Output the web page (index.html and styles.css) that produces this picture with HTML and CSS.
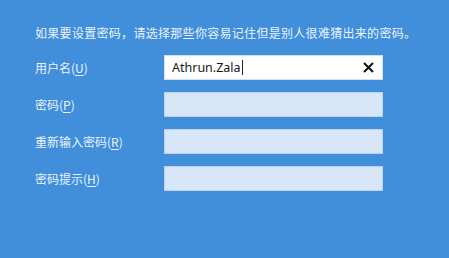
FILE: index.html
```html
<!DOCTYPE html>
<html lang="zh-CN">
<head>
    <meta charset="UTF-8">
    <title>创建用户</title>
    <link rel="stylesheet" href="styles.css">
</head>
<body>
    <div class="page">
        <p class="intro">如果要设置密码，请选择那些你容易记住但是别人很难猜出来的密码。</p>

        <div class="form">
            <div class="row">
                <label class="label">用户名(<u>U</u>)</label>
                <div class="field filled">
                    <span class="value">Athrun.Zala</span><span class="caret"></span>
                    <svg class="clear" width="11" height="11" viewBox="0 0 11 11">
                        <path d="M1 1 L10 10 M10 1 L1 10" stroke="#111" stroke-width="2" fill="none"/>
                    </svg>
                </div>
            </div>
            <div class="row">
                <label class="label">密码(<u>P</u>)</label>
                <div class="field"></div>
            </div>
            <div class="row">
                <label class="label">重新输入密码(<u>R</u>)</label>
                <div class="field"></div>
            </div>
            <div class="row">
                <label class="label">密码提示(<u>H</u>)</label>
                <div class="field"></div>
            </div>
        </div>
    </div>
</body>
</html>
```

FILE: styles.css
```css
body {
    margin: 0;
    background-color: #418edb;
    font-family: "Noto Sans CJK SC", "Noto Sans", sans-serif;
    color: #eaf3fd;
}
.page {
    padding: 25px 0 0 35px;
    height: 233px;
}
.intro {
    margin: 0;
    font-size: 12px;
    line-height: 16px;
    letter-spacing: 0.3px;
}
.form {
    margin-top: 14px;
    display: flex;
    flex-direction: column;
    gap: 12px;
}
.row {
    display: flex;
    align-items: center;
    height: 25px;
}
.label {
    width: 129px;
    font-size: 12px;
}
.label u {
    text-underline-offset: 2px;
}
.field {
    box-sizing: border-box;
    width: 219px;
    height: 25px;
    background: #d8e7f8;
    border: 1px solid #b9d3f1;
    display: flex;
    align-items: center;
}
.filled {
    background: #ffffff;
    border-color: #d0e1f5;
    padding: 0 7px 0 7px;
}
.value {
    font-family: "Noto Sans", sans-serif;
    font-size: 12.5px;
    color: #1a1a1a;
}
.caret {
    width: 1px;
    height: 15px;
    background: #222;
    margin-left: 1px;
}
.clear {
    margin-left: auto;
    margin-right: 1px;
}
```
